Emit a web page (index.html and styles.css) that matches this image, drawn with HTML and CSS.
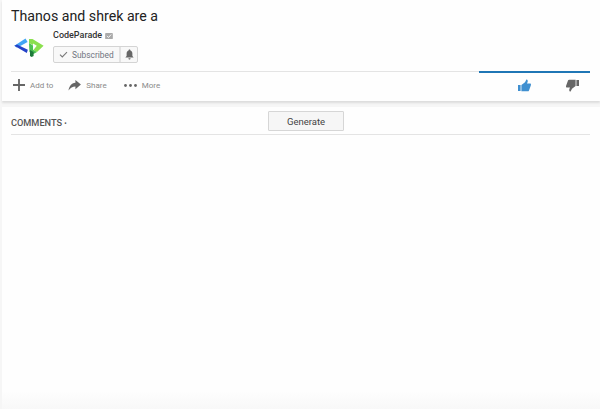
FILE: index.html
```html
<!DOCTYPE html>
<html lang="en">
<head>
<meta charset="utf-8">
<title>Thanos and shrek are a</title>
<link rel="stylesheet" href="styles.css">
</head>
<body>
<main class="page">
  <section class="card video">
    <h1 class="title">Thanos and shrek are a</h1>
    <div class="channel">
      <svg class="logo" viewBox="14 38 30 19" aria-hidden="true">
        <path d="M25.5 38.6 L27.6 42 L19.4 46.4 L16.6 47.6 L14.4 45.8 Z" fill="#42a5f5"/>
        <path d="M14.4 45.8 L17 44.4 L27.8 49.8 L26.8 53 Z" fill="#2442c8"/>
        <path d="M29 39 L32.5 39 L43.6 45.8 L37 52 L33.4 50 L36.8 45.8 L33 43.4 L33 45 L29 43 Z" fill="#8be04e"/>
        <path d="M29 43 L33 45.6 L33 49.8 L37 52 L33.4 54 L29.4 52 Z" fill="#4cc152"/>
        <path d="M30 50 L33.6 52 L33.6 56 L31.6 57 L30 56 Z" fill="#1d7a3a"/>
      </svg>
      <div class="channel-info">
        <div class="channel-name">CodeParade
          <svg class="verified" viewBox="0 0 9 7" aria-hidden="true"><rect width="9" height="7" rx="1" fill="#aaa"/><path d="M2 3.5 L4 5.2 L7 1.8" fill="none" stroke="#fff"/></svg>
        </div>
        <div class="sub-group">
          <div class="sub-btn">
            <svg class="check" viewBox="0 0 10 8" aria-hidden="true"><path d="M1 4.2 L3.6 6.8 L9 1.2" fill="none" stroke="#777" stroke-width="1.2"/></svg>
            <span>Subscribed</span>
          </div>
          <div class="bell-btn">
            <svg class="bell" viewBox="0 0 10 12" aria-hidden="true"><path d="M5 0.5 C5.7 0.5 6 1 6 1.6 C7.6 2.1 8.2 3.4 8.2 5 L8.2 7.6 L9.6 9.4 L0.4 9.4 L1.8 7.6 L1.8 5 C1.8 3.4 2.4 2.1 4 1.6 C4 1 4.3 0.5 5 0.5 Z M3.8 10.2 L6.2 10.2 C6.2 11 5.7 11.6 5 11.6 C4.3 11.6 3.8 11 3.8 10.2 Z" fill="#666"/></svg>
          </div>
        </div>
      </div>
    </div>
    <div class="rule-row">
      <div class="rule"></div>
      <div class="rule-like"></div>
    </div>
    <div class="actions">
      <div class="action action-add">
        <svg class="icon-add" viewBox="0 0 13 13" aria-hidden="true"><path d="M5.5 0 H7.5 V5.5 H13 V7.5 H7.5 V13 H5.5 V7.5 H0 V5.5 H5.5 Z" fill="#666"/></svg>
        <span>Add to</span>
      </div>
      <div class="action">
        <svg class="icon-share" viewBox="0 0 14 12" aria-hidden="true"><path d="M8 0 L14 5 L8 10 L8 7 C5 7 2.5 8.2 0.5 11.5 C1 7 3.5 3.6 8 3 Z" fill="#666"/></svg>
        <span>Share</span>
      </div>
      <div class="action">
        <svg class="icon-more" viewBox="0 0 13 3" aria-hidden="true"><circle cx="1.5" cy="1.5" r="1.4" fill="#666"/><circle cx="6.5" cy="1.5" r="1.4" fill="#666"/><circle cx="11.5" cy="1.5" r="1.4" fill="#666"/></svg>
        <span>More</span>
      </div>
      <div class="votes">
        <svg class="thumb" viewBox="0 0 13 13" aria-hidden="true"><path d="M0 6 H2.6 V12 H0 Z" fill="#3f8fd0"/><path d="M3.4 6 L7 3.2 L8.4 0.4 C9.6 0.4 10 1.6 9.6 3 L9 4.6 H12 C13 4.6 13.2 5.6 12.8 6.4 L11 11.4 C10.8 12 10.4 12.2 9.8 12.2 H3.4 Z" fill="#3f8fd0"/></svg>
        <svg class="thumb" viewBox="0 0 13 13" aria-hidden="true"><path d="M13 7 H10.4 V1 H13 Z" fill="#666"/><path d="M9.6 7 L6 9.8 L4.6 12.6 C3.4 12.6 3 11.4 3.4 10 L4 8.4 H1 C0 8.4 -0.2 7.4 0.2 6.6 L2 1.6 C2.2 1 2.6 0.8 3.2 0.8 H9.6 Z" fill="#666"/></svg>
      </div>
    </div>
  </section>
  <section class="card comments">
    <div class="comments-head">
      <div class="comments-label">COMMENTS <span class="dot">•</span></div>
      <button class="generate" type="button">Generate</button>
    </div>
  </section>
</main>
</body>
</html>
```
FILE: styles.css
```css
* { box-sizing: border-box; }
html, body { margin: 0; height: 100%; }
body {
  background: #f6f6f6;
  font-family: Roboto, "Liberation Sans", sans-serif;
  overflow: hidden;
}
.page {
  height: 409px;
  padding-left: 2px;
  display: flex;
  flex-direction: column;
  gap: 6px;
}
.card { background: #fefefe; }
.video {
  height: 101px;
  padding: 7px 10px 0 9px;
  box-shadow: 0 2px 2px #dcdcdc;
}
.title {
  margin: 0;
  font-size: 14.2px;
  line-height: 18px;
  font-weight: 400;
  color: #222;
}
.channel {
  display: flex;
  margin-top: 5px;
  height: 41px;
}
.logo { width: 30px; height: 19px; margin: 8px 9px 0 3px; flex: none; }
.channel-info { display: flex; flex-direction: column; }
.channel-name {
  font-size: 9px;
  line-height: 11px;
  font-weight: 500;
  color: #333;
  display: flex;
  align-items: center;
  gap: 3px;
}
.verified { width: 8px; height: 6px; }
.sub-group {
  display: flex;
  margin-top: 5px;
  width: 85px;
  height: 17px;
  border: 1px solid #d4d4d4;
  border-radius: 2px;
  background: #f8f8f8;
}
.sub-btn {
  width: 67px;
  display: flex;
  align-items: center;
  gap: 4px;
  padding-left: 5px;
  font-size: 8.4px;
  color: #70757f;
  border-right: 2px solid #e2e2e2;
}
.check { width: 9px; height: 7px; }
.bell-btn { flex: 1; display: flex; align-items: center; justify-content: center; }
.bell { width: 9px; height: 11px; }
.rule-row { display: flex; height: 2px; }
.rule { width: 468px; height: 1px; background: #e4e4e4; }
.rule-like { width: 111px; height: 2px; background: #1f76b5; }
.actions {
  display: flex;
  align-items: center;
  height: 24px;
  padding-left: 2px;
  font-size: 8px;
  color: #8a8a8a;
}
.action { display: flex; align-items: center; gap: 5px; margin-right: 17px; }
.action-add { margin-right: 15px; }
.icon-add { width: 12px; height: 12px; }
.icon-share { width: 13px; height: 11px; }
.icon-more { width: 13px; height: 3px; }
.votes {
  margin-left: auto;
  display: flex;
  gap: 35px;
  padding-right: 11px;
}
.thumb { width: 13px; height: 13px; }
.comments {
  flex: 1;
  padding: 0 9px;
  background: linear-gradient(#fefefe 94%, #f8f8f8);
}
.comments-head {
  display: grid;
  grid-template-columns: 257px auto 1fr;
  height: 28px;
  padding-top: 4px;
  border-bottom: 1px solid #e4e4e4;
  width: 579px;
}
.comments-label { font-size: 9.2px; line-height: 12px; margin-top: 6px; font-weight: 500; color: #555; }
.dot { font-size: 7px; }
.generate {
  width: 76px;
  height: 20px;
  padding: 0;
  border: 1px solid #d6d6d6;
  border-radius: 1px;
  background: #f6f6f6;
  font-family: Roboto, "Liberation Sans", sans-serif;
  font-size: 9.5px;
  color: #444;
}
```
